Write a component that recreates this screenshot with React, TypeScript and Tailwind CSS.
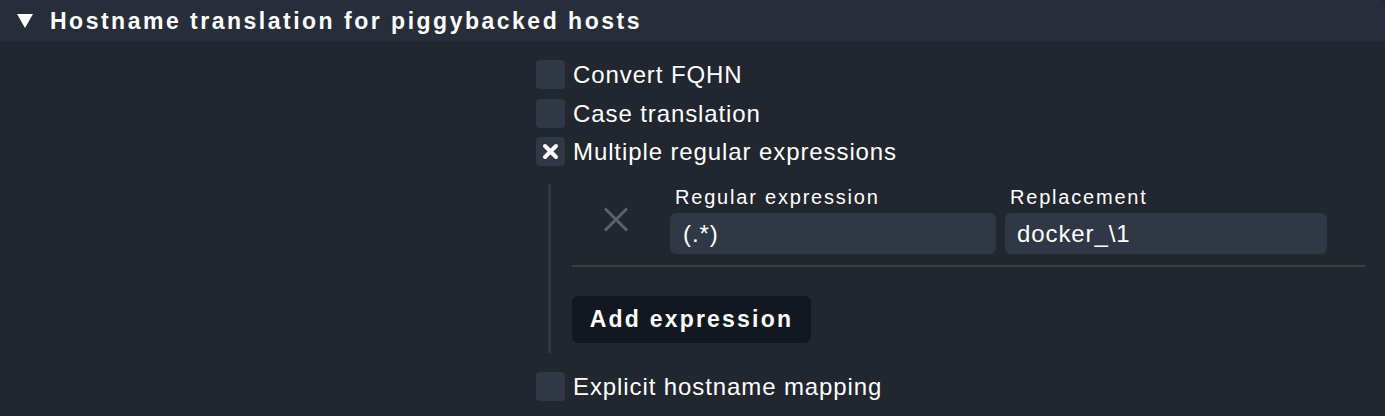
import React from "react";

function Checkbox({ checked }: { checked?: boolean }) {
  return (
    <div className="w-[29px] h-[29px] rounded-[4px] bg-[#2f3844] flex items-center justify-center shrink-0">
      {checked && (
        <svg width="17" height="17" viewBox="0 0 17 17">
          <path d="M3 3 L14 14 M14 3 L3 14" stroke="#ffffff" strokeWidth="4" strokeLinecap="round" />
        </svg>
      )}
    </div>
  );
}

function CheckRow({ label, checked }: { label: string; checked?: boolean }) {
  return (
    <div className="flex items-center gap-[8px] h-[29px]">
      <Checkbox checked={checked} />
      <span className="text-[24px] leading-[29px] tracking-[0.9px] text-white">{label}</span>
    </div>
  );
}

export default function App() {
  return (
    <div
      className="w-full min-h-[416px] bg-[#21262f] text-white"
      style={{ fontFamily: '"Liberation Sans", Arial, sans-serif' }}
    >
      <div className="h-[42px] bg-[#272e39] rounded-tr-[6px] flex items-center pl-[17px] border-b border-[#242a33]">
        <svg width="16" height="14" viewBox="0 0 16 14" className="mr-[17px]">
          <polygon points="0,0 16,0 8,14" fill="#ffffff" />
        </svg>
        <span className="text-[23px] font-bold tracking-[2.5px] leading-[42px]">
          Hostname translation for piggybacked hosts
        </span>
      </div>

      <div className="pl-[536px] pt-[18px]">
        <div className="flex flex-col gap-[9.5px]">
          <CheckRow label="Convert FQHN" />
          <CheckRow label="Case translation" />
          <CheckRow label="Multiple regular expressions" checked />
        </div>

        <div className="ml-[12px] mt-[18px] border-l-[3px] border-[#2f3743] pl-[21px] pb-[10px]">
          <div className="flex">
            <div className="w-[98px] shrink-0 pl-[31px] pt-[23px]">
              <svg width="26" height="25" viewBox="0 0 26 25">
                <path d="M2 1.5 L24 23.5 M24 1.5 L2 23.5" stroke="#5a626c" strokeWidth="3" />
              </svg>
            </div>
            <div className="w-[326px] flex flex-col">
              <div className="pl-[5px] h-[25px] leading-[25px] text-[20px] tracking-[1.8px] mb-[4px] pt-[1px]">
                Regular expression
              </div>
              <div className="h-[41px] rounded-[6px] bg-[#2f3844] pl-[13px] flex items-center text-[24px] tracking-[0.9px]">
                (.*)
              </div>
            </div>
            <div className="w-[322px] ml-[9px] flex flex-col">
              <div className="pl-[5px] h-[25px] leading-[25px] text-[20px] tracking-[1.8px] mb-[4px] pt-[1px]">
                Replacement
              </div>
              <div className="h-[41px] rounded-[6px] bg-[#2f3844] pl-[12px] flex items-center text-[24px] tracking-[0.9px]">
                docker_\1
              </div>
            </div>
          </div>
          <div className="mt-[11px] h-[2px] w-[793px] bg-[#3d3e40]" />
          <button className="mt-[29px] h-[47px] w-[239px] rounded-[6px] bg-[#131820] text-[23px] font-bold tracking-[2.2px] text-white flex items-center justify-center">
            Add expression
          </button>
        </div>

        <div className="mt-[19px]">
          <CheckRow label="Explicit hostname mapping" />
        </div>
      </div>
    </div>
  );
}
